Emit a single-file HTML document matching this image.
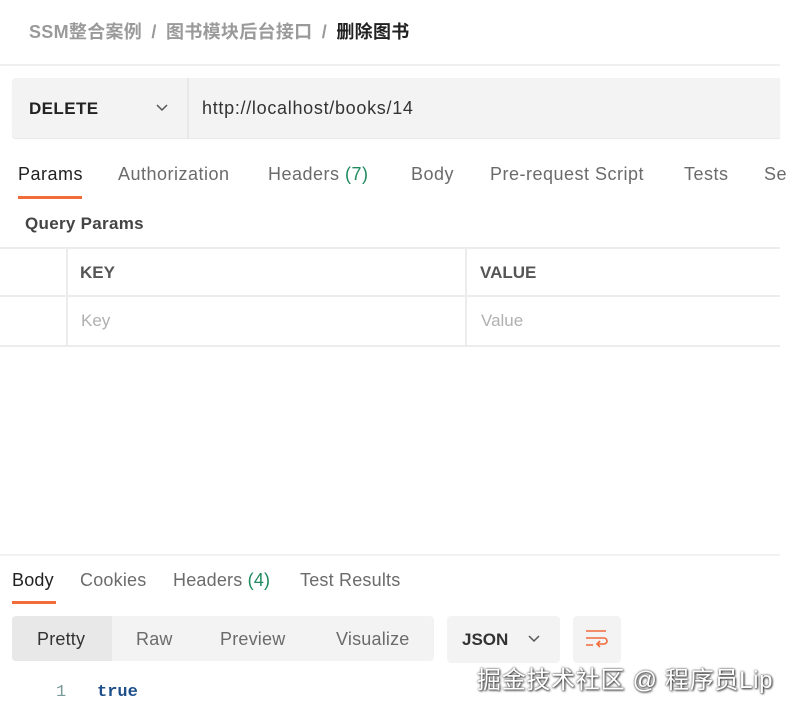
<!DOCTYPE html>
<html><head><meta charset="utf-8"><style>
*{margin:0;padding:0;box-sizing:border-box}
body{width:795px;height:711px;background:#fff;font-family:"Liberation Sans","Noto Sans CJK SC",sans-serif;position:relative;overflow:hidden;color:#333}
.a{position:absolute;white-space:nowrap}
</style></head><body>
<div class="a" style="left:29px;top:18px;font-size:18px;font-weight:bold;color:#9a9a9a;letter-spacing:0.3px">SSM整合案例 <span style="margin:0 4px">/</span> 图书模块后台接口 <span style="margin:0 4px">/</span> <span style="color:#222">删除图书</span></div>
<div class="a" style="left:0;top:64px;width:780px;height:2px;background:#f0f0f0"></div>
<div class="a" style="left:12px;top:78px;width:768px;height:60px;background:#f3f3f3;border-radius:4px 0 0 4px;box-shadow:0 1px 1px #e6e6e6"></div>
<div class="a" style="left:187px;top:78px;width:2px;height:60px;background:#e8e8e8"></div>
<div class="a" style="left:29px;top:99px;font-size:17px;font-weight:bold;color:#222;letter-spacing:0.4px">DELETE</div>
<svg class="a" style="left:155px;top:103px" width="14" height="10"><path d="M2 2l5 5 5-5" stroke="#555" stroke-width="1.5" fill="none"/></svg>
<div class="a" style="left:202px;top:98px;font-size:18px;color:#333;letter-spacing:0.7px">http://localhost/books/14</div>
<div class="a" style="top:164px;left:0;font-size:18px;color:#6b6b6b;letter-spacing:0.5px">
<span class="a" style="left:18px;color:#222">Params</span>
<span class="a" style="left:118px">Authorization</span>
<span class="a" style="left:268px">Headers <span style="color:#1e8a5e">(7)</span></span>
<span class="a" style="left:411px">Body</span>
<span class="a" style="left:490px">Pre-request Script</span>
<span class="a" style="left:684px">Tests</span>
<span class="a" style="left:764px">Se</span>
</div>
<div class="a" style="left:18px;top:196px;width:64px;height:3px;background:#f26b3a"></div>
<div class="a" style="left:25px;top:214px;font-size:17px;font-weight:bold;color:#444;letter-spacing:0.3px">Query Params</div>
<div class="a" style="left:0;top:247px;width:780px;height:2px;background:#ececec"></div>
<div class="a" style="left:0;top:295px;width:780px;height:2px;background:#ececec"></div>
<div class="a" style="left:0;top:345px;width:780px;height:2px;background:#ececec"></div>
<div class="a" style="left:66px;top:247px;width:2px;height:100px;background:#ececec"></div>
<div class="a" style="left:465px;top:247px;width:2px;height:100px;background:#ececec"></div>
<div class="a" style="left:80px;top:263px;font-size:17px;font-weight:bold;color:#555">KEY</div>
<div class="a" style="left:480px;top:263px;font-size:17px;font-weight:bold;color:#555">VALUE</div>
<div class="a" style="left:81px;top:311px;font-size:17px;color:#b0b0b0">Key</div>
<div class="a" style="left:481px;top:311px;font-size:17px;color:#b0b0b0">Value</div>
<div class="a" style="left:0;top:554px;width:780px;height:2px;background:#f2f2f2"></div>
<div class="a" style="top:570px;left:0;font-size:18px;color:#6b6b6b;letter-spacing:0.2px">
<span class="a" style="left:12px;color:#222">Body</span>
<span class="a" style="left:80px">Cookies</span>
<span class="a" style="left:173px">Headers <span style="color:#1e8a5e">(4)</span></span>
<span class="a" style="left:300px">Test Results</span>
</div>
<div class="a" style="left:12px;top:601px;width:44px;height:3px;background:#f26b3a"></div>
<div class="a" style="left:12px;top:616px;width:422px;height:45px;background:#f3f3f3;border-radius:4px"></div>
<div class="a" style="left:12px;top:616px;width:100px;height:45px;background:#e8e8e8;border-radius:4px 0 0 4px"></div>
<div class="a" style="top:629px;left:0;font-size:18px;color:#6b6b6b;letter-spacing:0.2px">
<span class="a" style="left:37px;color:#333">Pretty</span>
<span class="a" style="left:136px">Raw</span>
<span class="a" style="left:220px">Preview</span>
<span class="a" style="left:336px">Visualize</span>
</div>
<div class="a" style="left:447px;top:616px;width:113px;height:47px;background:#f3f3f3;border-radius:4px"></div>
<div class="a" style="left:462px;top:630px;font-size:17px;font-weight:bold;color:#333">JSON</div>
<svg class="a" style="left:527px;top:634px" width="14" height="10"><path d="M2 2l5 5 5-5" stroke="#555" stroke-width="1.5" fill="none"/></svg>
<div class="a" style="left:573px;top:616px;width:48px;height:47px;background:#f3f3f3;border-radius:4px"></div>
<svg class="a" style="left:585px;top:628px" width="24" height="24"><path d="M1 3h20M1 10h18a3 3 0 0 1 0 6h-6M1 17h7M15 13l-3 3 3 3" stroke="#f26b3a" stroke-width="1.6" fill="none"/></svg>
<div class="a" style="left:56px;top:683px;font-size:17px;color:#7a9a9a;font-family:'Liberation Mono',monospace">1</div>
<div class="a" style="left:97px;top:683px;font-size:17px;font-weight:bold;color:#1f4f8a;font-family:'Liberation Mono',monospace">true</div>
<div class="a" style="left:477px;top:660px;font-size:24px;letter-spacing:0.7px;color:#fff;text-shadow:0 0 2px #333,1px 1px 2px #333">掘金技术社区 @ 程序员Lip</div>
</body></html>
